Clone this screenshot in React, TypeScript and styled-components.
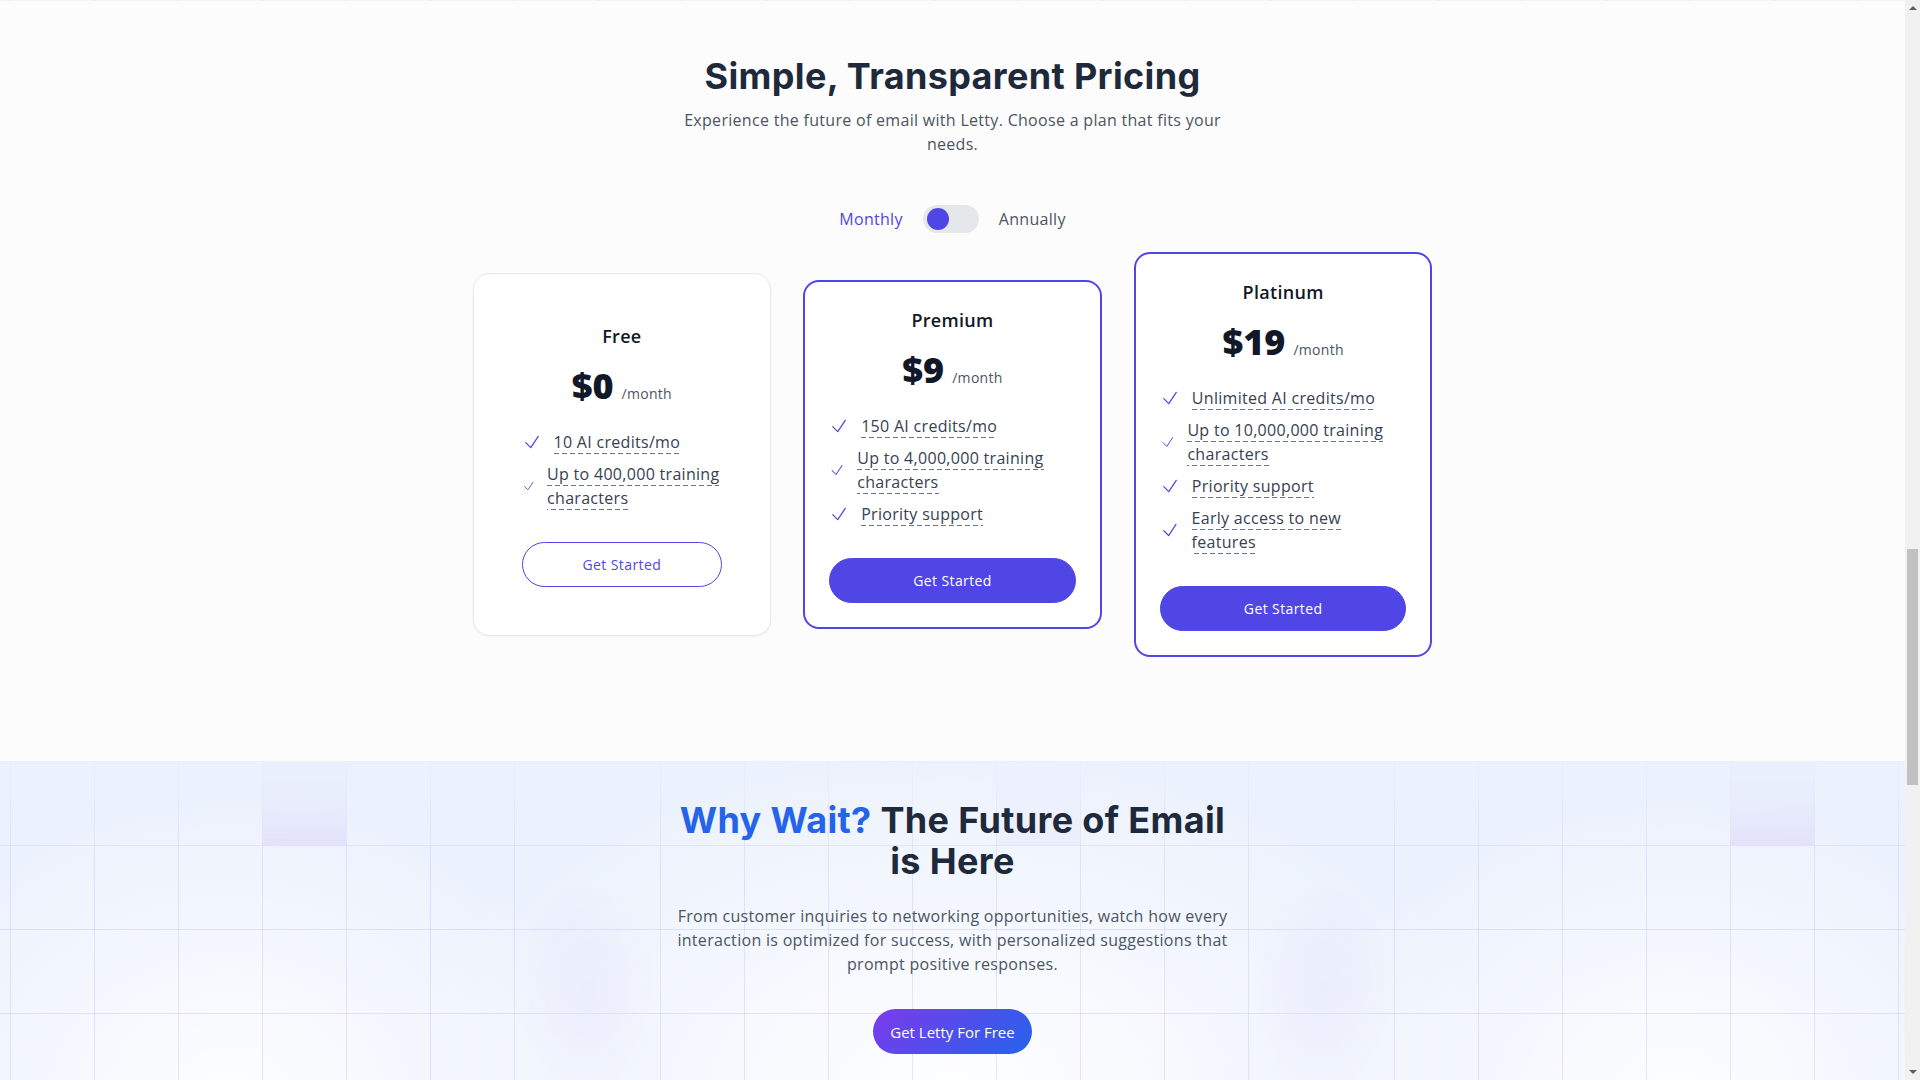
import React, { useState } from 'react';
import styled, { createGlobalStyle } from 'styled-components';

const colors = {
  indigo: '#4f46e5',
  heading: '#1e293b',
  ink: '#111827',
  text: '#4b5563',
  feature: '#374151',
  border: '#e5e7eb',
  blue: '#2563eb',
  grid: 'rgba(205, 202, 246, 0.5)',
  wash: '#ebf1fd',
};

const GlobalStyle = createGlobalStyle`
  * { box-sizing: border-box; }
  html, body { margin: 0; padding: 0; }
  body {
    background: #fcfcfc;
    color: ${colors.ink};
    font-family: 'Open Sans', 'Liberation Sans', sans-serif;
    letter-spacing: 0.3px;
  }
`;

// room for the classic scrollbar the page shows on its right edge
const Page = styled.div`
  margin-right: 15px;
`;

const ScrollRail = styled.div`
  position: fixed;
  top: 0;
  right: 0;
  bottom: 0;
  width: 15px;
  display: flex;
  flex-direction: column;
  align-items: center;
  background: #f1f1f1;
  z-index: 10;
`;

const RailArrow = styled.div<{ $down?: boolean }>`
  width: 0;
  height: 0;
  margin: ${(p) => (p.$down ? 'auto 0 6px' : '6px 0 0')};
  border-left: 4px solid transparent;
  border-right: 4px solid transparent;
  ${(p) => (p.$down ? 'border-top: 4px solid #5f5f5f;' : 'border-bottom: 4px solid #5f5f5f;')}
`;

const RailThumb = styled.div`
  width: 11px;
  height: 236px;
  margin-top: 539px;
  background: #c1c1c1;
`;

// the last pixel of the section above, with its grid lines
const TopEdge = styled.div`
  height: 1px;
  background-color: #f0f3fe;
  background-image: linear-gradient(to right, ${colors.grid} 1px, transparent 1px);
  background-size: 84px 1px;
  background-position: 10px 0;
`;

const PricingSection = styled.section`
  padding: 55px 24px 104px;
`;

const Title = styled.h2`
  margin: 0;
  text-align: center;
  font-family: Inter, 'Liberation Sans', sans-serif;
  font-size: 36px;
  line-height: 40px;
  font-weight: 700;
  letter-spacing: 0.35px;
  color: ${colors.heading};
`;

const Lead = styled.p`
  max-width: 576px;
  margin: 12px auto 0;
  text-align: center;
  font-size: 16px;
  line-height: 24px;
  color: ${colors.text};
`;

const BillingToggle = styled.div`
  display: flex;
  align-items: center;
  justify-content: center;
  gap: 20px;
  height: 28px;
  margin-top: 49px;
`;

const BillingLabel = styled.span<{ $active?: boolean }>`
  font-size: 16px;
  color: ${(p) => (p.$active ? colors.indigo : colors.text)};
`;

const Switch = styled.button`
  display: flex;
  align-items: center;
  width: 56px;
  height: 28px;
  padding: 0 4px;
  border: 0;
  border-radius: 999px;
  background: ${colors.border};
  cursor: pointer;
`;

const Knob = styled.span<{ $on: boolean }>`
  width: 22px;
  height: 22px;
  border-radius: 50%;
  background: ${colors.indigo};
  margin-left: ${(p) => (p.$on ? '26px' : '0')};
  transition: margin-left 0.2s;
`;

const PlanGrid = styled.div`
  display: grid;
  grid-template-columns: repeat(3, 1fr);
  gap: 32px;
  align-items: center;
  max-width: 960px;
  margin: 19px auto 0;
`;

const PlanCard = styled.div<{ $featured?: boolean }>`
  display: flex;
  flex-direction: column;
  background: #fff;
  border-radius: 16px;
  border: ${(p) => (p.$featured ? `2px solid ${colors.indigo}` : `1px solid ${colors.border}`)};
  padding: ${(p) => (p.$featured ? '24px' : '48px')};
  box-shadow: ${(p) => (p.$featured ? 'none' : '0 1px 2px rgba(15, 23, 42, 0.04)')};
`;

const PlanName = styled.h3`
  margin: 0;
  text-align: center;
  font-size: 18px;
  line-height: 28px;
  font-weight: 600;
  color: ${colors.ink};
`;

const PriceRow = styled.div`
  display: flex;
  justify-content: center;
  align-items: baseline;
  gap: 8px;
  margin: 16px 0 24px;
`;

const Amount = styled.span`
  font-size: 36px;
  line-height: 40px;
  font-weight: 800;
  letter-spacing: 0;
  color: ${colors.ink};
`;

const Per = styled.span`
  font-size: 14px;
  color: ${colors.text};
`;

const Features = styled.ul`
  display: flex;
  flex-direction: column;
  gap: 8px;
  margin: 0 0 32px;
  padding: 0;
  list-style: none;
`;

const Feature = styled.li`
  display: flex;
  align-items: center;
  gap: 12px;
  font-size: 16px;
  line-height: 24px;
  color: ${colors.feature};
`;

const CheckMark = styled.svg`
  width: 20px;
  height: 20px;
  min-width: 0;
  color: ${colors.indigo};
`;

const FeatureText = styled.span``;

// dashed rule under every wrapped line of a feature
const Dashed = styled.span`
  padding-bottom: 1px;
  background-image: linear-gradient(to right, #6b7280 5px, transparent 5px);
  background-size: 8px 1px;
  background-repeat: repeat-x;
  background-position: 0 100%;
`;

const PlanButton = styled.button<{ $filled?: boolean }>`
  display: flex;
  align-items: center;
  justify-content: center;
  width: 100%;
  height: 45px;
  border-radius: 999px;
  border: 1px solid ${colors.indigo};
  background: ${(p) => (p.$filled ? colors.indigo : '#fff')};
  color: ${(p) => (p.$filled ? '#fff' : colors.indigo)};
  font-family: inherit;
  font-size: 14px;
  font-weight: 500;
  letter-spacing: 0.4px;
  cursor: pointer;
`;

const CtaSection = styled.section`
  display: grid;
  min-height: 560px;
  background:
    radial-gradient(560px 360px at 50% 330px, rgba(255, 255, 255, 0.95), rgba(255, 255, 255, 0)),
    radial-gradient(380px 320px at 230px 340px, rgba(255, 255, 255, 0.9), rgba(255, 255, 255, 0)),
    radial-gradient(380px 320px at calc(100% - 230px) 340px, rgba(255, 255, 255, 0.9), rgba(255, 255, 255, 0)),
    ${colors.wash};
`;

const Backdrop = styled.div`
  grid-area: 1 / 1;
  display: flex;
  padding-left: 10px;
  background-image: linear-gradient(to bottom, ${colors.grid} 1px, transparent 1px);
  background-size: 100% 84px;
  mask-image: linear-gradient(to bottom, rgba(0, 0, 0, 0.1), #000 110px);
`;

const GridPanel = styled.div<{ $width: number; $cell: number; $glow: number }>`
  width: ${(p) => p.$width}px;
  flex-shrink: 0;
  background-image:
    linear-gradient(to bottom, rgba(226, 224, 251, ${(p) => p.$glow * 0.2}), rgba(222, 220, 250, ${(p) => p.$glow})),
    linear-gradient(to right, ${colors.grid} 1px, transparent 1px);
  background-size: 84px 84px, 84px 84px;
  background-position: ${(p) => p.$cell * 84}px 0, 0 0;
  background-repeat: no-repeat, repeat;
`;

const GridGap = styled.div`
  width: 145px;
  flex-shrink: 0;
  background: radial-gradient(70px 110px at 50% 230px, rgba(226, 226, 250, 0.4), rgba(226, 226, 250, 0));
`;

const CtaContent = styled.div`
  grid-area: 1 / 1;
  position: relative;
  z-index: 1;
  display: flex;
  flex-direction: column;
  align-items: center;
  padding: 39px 24px 0;
  text-align: center;
`;

const CtaTitle = styled.h2`
  max-width: 560px;
  margin: 0;
  font-family: Inter, 'Liberation Sans', sans-serif;
  font-size: 36px;
  line-height: 41px;
  font-weight: 700;
  letter-spacing: 0.35px;
  color: ${colors.heading};
`;

const Accent = styled.span`
  color: ${colors.blue};
`;

const CtaText = styled.p`
  max-width: 576px;
  margin: 22px 0 0;
  font-size: 16px;
  line-height: 24px;
  color: ${colors.text};
`;

const CtaButton = styled.button`
  height: 45px;
  margin-top: 33px;
  padding: 0 17px;
  border: 0;
  border-radius: 999px;
  background: linear-gradient(135deg, #7c3aed, #2563eb);
  color: #fff;
  font-family: inherit;
  font-size: 15px;
  font-weight: 500;
  letter-spacing: 0;
  cursor: pointer;
`;

const Check = () => (
  <CheckMark viewBox="0 0 24 24" fill="none" stroke="currentColor" strokeWidth={1.5}>
    <path strokeLinecap="round" strokeLinejoin="round" d="M4.5 12.75l6 6 9-13.5" />
  </CheckMark>
);

const plans = [
  {
    name: 'Free',
    price: '$0',
    featured: false,
    features: ['10 AI credits/mo', 'Up to 400,000 training characters'],
  },
  {
    name: 'Premium',
    price: '$9',
    featured: true,
    features: ['150 AI credits/mo', 'Up to 4,000,000 training characters', 'Priority support'],
  },
  {
    name: 'Platinum',
    price: '$19',
    featured: true,
    features: [
      'Unlimited AI credits/mo',
      'Up to 10,000,000 training characters',
      'Priority support',
      'Early access to new features',
    ],
  },
];

export default function App() {
  const [annual, setAnnual] = useState(false);

  return (
    <>
      <GlobalStyle />
      <Page>
        <TopEdge />
        <PricingSection>
          <Title>Simple, Transparent Pricing</Title>
          <Lead>Experience the future of email with Letty. Choose a plan that fits your needs.</Lead>

          <BillingToggle>
            <BillingLabel $active={!annual}>Monthly</BillingLabel>
            <Switch aria-label="Toggle billing period" onClick={() => setAnnual(!annual)}>
              <Knob $on={annual} />
            </Switch>
            <BillingLabel $active={annual}>Annually</BillingLabel>
          </BillingToggle>

          <PlanGrid>
            {plans.map((plan) => (
              <PlanCard key={plan.name} $featured={plan.featured}>
                <PlanName>{plan.name}</PlanName>
                <PriceRow>
                  <Amount>{plan.price}</Amount>
                  <Per>/month</Per>
                </PriceRow>
                <Features>
                  {plan.features.map((f) => (
                    <Feature key={f}>
                      <Check />
                      <FeatureText>
                        <Dashed>{f}</Dashed>
                      </FeatureText>
                    </Feature>
                  ))}
                </Features>
                <PlanButton $filled={plan.featured}>Get Started</PlanButton>
              </PlanCard>
            ))}
          </PlanGrid>
        </PricingSection>

        <CtaSection>
          <Backdrop>
            <GridPanel $width={505} $cell={3} $glow={0.95} />
            <GridGap />
            <GridPanel $width={589} $cell={4} $glow={0.35} />
            <GridGap />
            <GridPanel $width={505} $cell={4} $glow={0.95} />
          </Backdrop>
          <CtaContent>
            <CtaTitle>
              <Accent>Why Wait?</Accent> The Future of Email is Here
            </CtaTitle>
            <CtaText>
              From customer inquiries to networking opportunities, watch how every interaction is
              optimized for success, with personalized suggestions that prompt positive responses.
            </CtaText>
            <CtaButton>Get Letty For Free</CtaButton>
          </CtaContent>
        </CtaSection>
      </Page>

      <ScrollRail aria-hidden>
        <RailArrow />
        <RailThumb />
        <RailArrow $down />
      </ScrollRail>
    </>
  );
}
